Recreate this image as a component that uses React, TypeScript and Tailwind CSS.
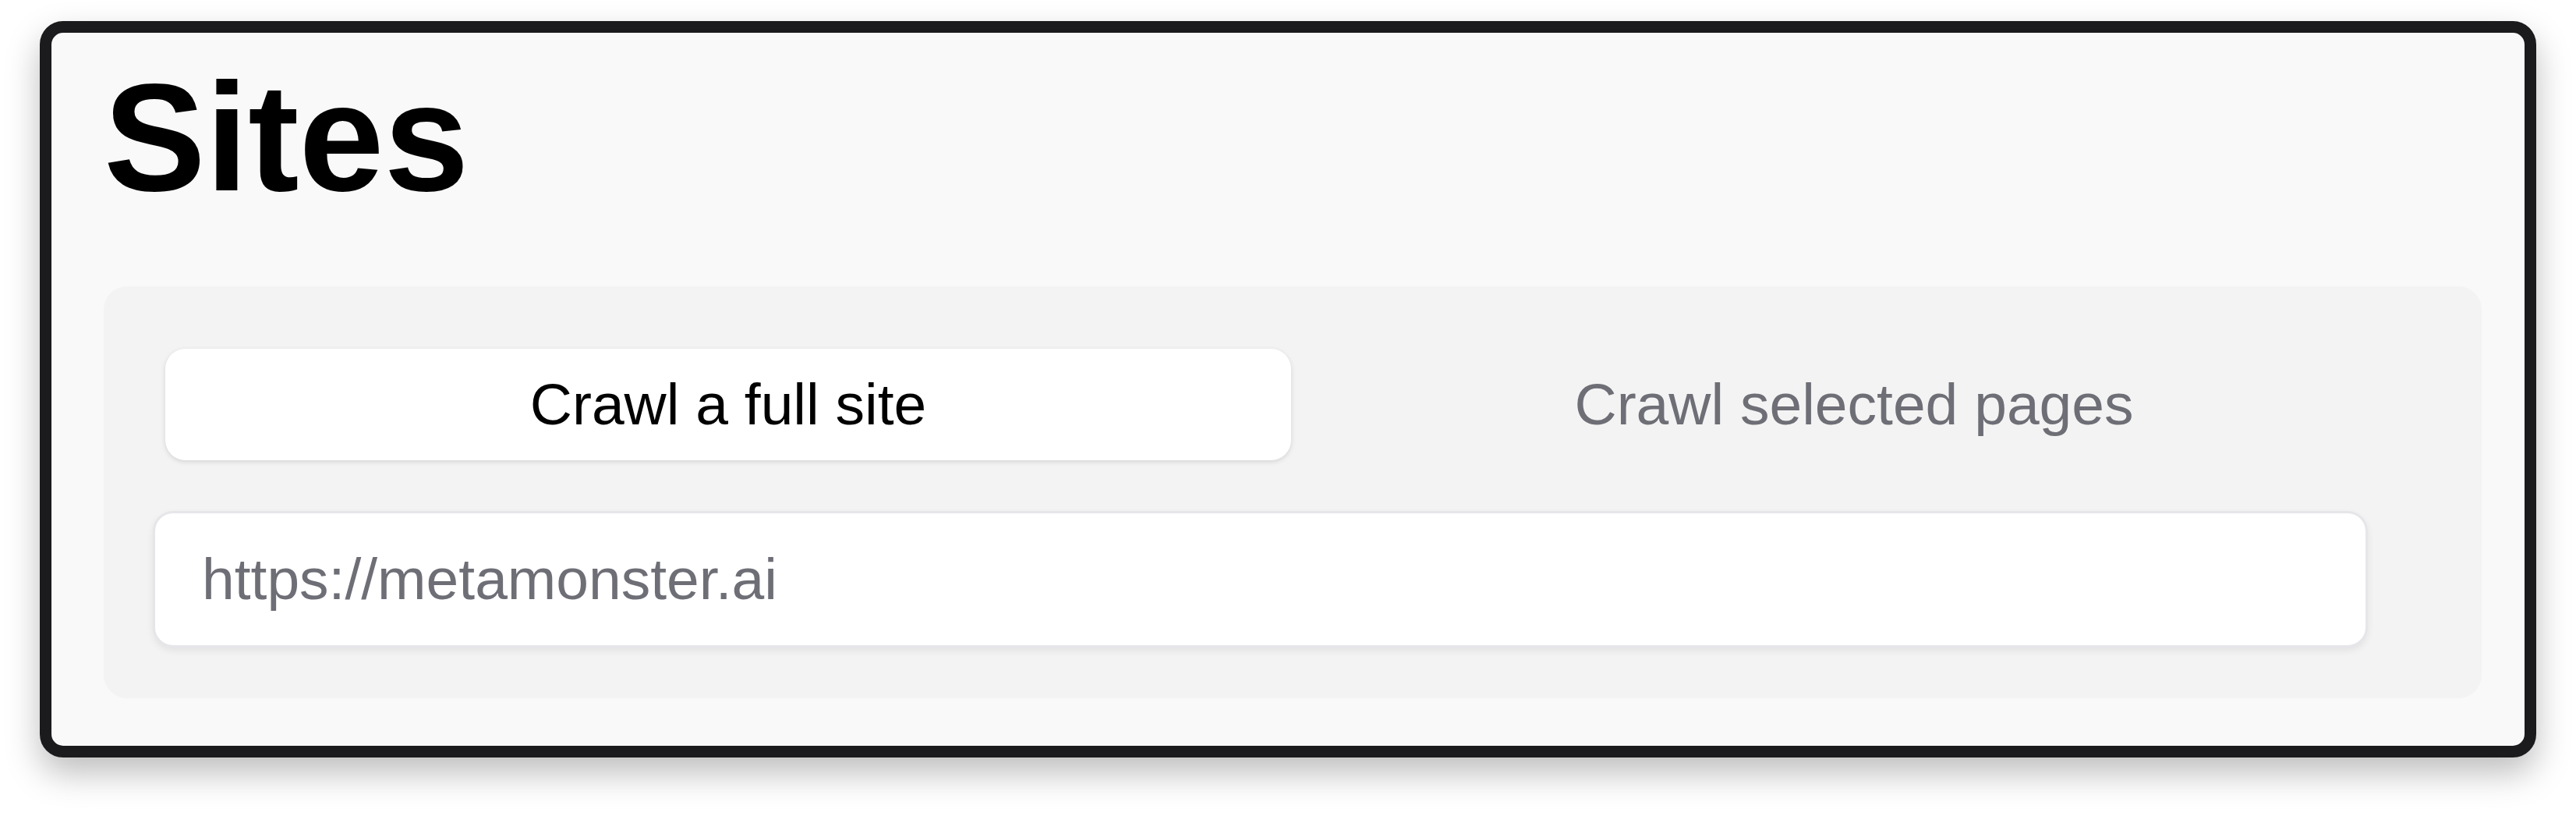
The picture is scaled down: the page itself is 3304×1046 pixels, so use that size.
export default function App() {
  const font = { fontFamily: '"Liberation Sans", Arial, sans-serif' };
  return (
    <div className="w-[3304px] h-[1046px] bg-white pl-[51px] pt-[27px]" style={font}>
      <div className="w-[3202px] h-[944px] rounded-[30px] border-[15px] border-[#1b1b1d] bg-[#f9f9f9] shadow-[0_20px_44px_rgba(0,0,0,0.26)] overflow-hidden">
        <h1 className="pl-[67px] pt-[37px] text-[196px] leading-none font-bold text-black">Sites</h1>
        <div className="ml-[67px] mt-[92px] w-[3050px] h-[528px] rounded-[30px] bg-[#f3f3f3] pt-[80px] pl-[79px] pr-[83px]">
          <div className="flex h-[143px]">
            <div className="flex-1 flex items-center justify-center rounded-[26px] bg-white shadow-[0_2px_6px_rgba(0,0,0,0.13)] text-[75px] text-black">
              Crawl a full site
            </div>
            <div className="flex-1 flex items-center justify-center text-[75px] text-[#6e6e76]">
              Crawl selected pages
            </div>
          </div>
          <div className="mt-[65px] -ml-[16px] w-[2841px] h-[175px] rounded-[26px] bg-white border-[3px] border-[#e6e6ea] shadow-[0_4px_10px_rgba(0,0,0,0.07)] flex items-center pl-[60px] text-[75px] text-[#6e6e76]">
            https://metamonster.ai
          </div>
        </div>
      </div>
    </div>
  );
}
